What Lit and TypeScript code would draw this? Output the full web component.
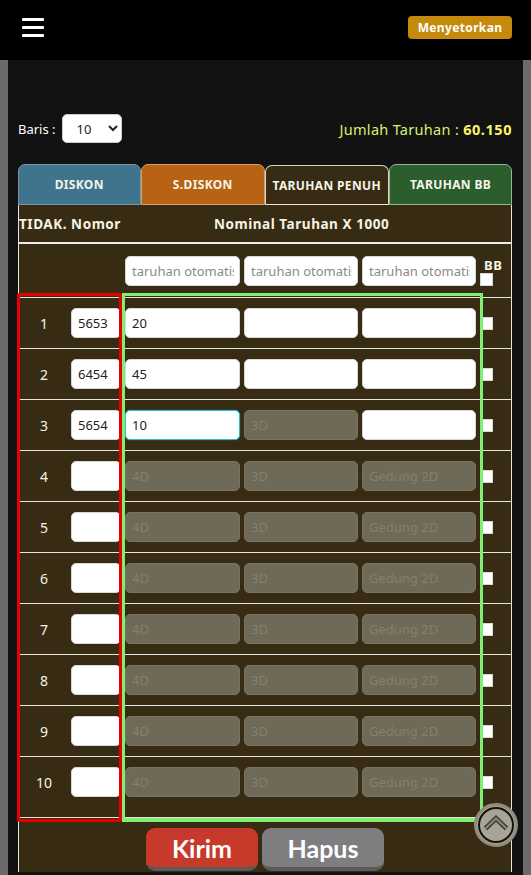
import { LitElement, html, css } from "lit";
import { customElement } from "lit/decorators.js";

type Row = { n: number; nomor: string; a: string; bOpen: boolean; cOpen: boolean; aOpen: boolean; focus?: boolean };

const rows: Row[] = [
  { n: 1, nomor: "5653", a: "20", aOpen: true, bOpen: true, cOpen: true },
  { n: 2, nomor: "6454", a: "45", aOpen: true, bOpen: true, cOpen: true },
  { n: 3, nomor: "5654", a: "10", aOpen: true, bOpen: false, cOpen: true, focus: true },
  ...[4, 5, 6, 7, 8, 9, 10].map((n) => ({ n, nomor: "", a: "", aOpen: false, bOpen: false, cOpen: false })),
];

@customElement("app-root")
export class AppRoot extends LitElement {
  static styles = css`
    :host {
      display: block;
      position: relative;
      height: 875px;
      overflow: hidden;
      background: #6b6b6b;
      font-family: "Noto Sans", "Open Sans", sans-serif;
      color: #fff;
    }
    * { box-sizing: border-box; }
    .topbar {
      height: 60px;
      background: #000;
      display: flex;
      align-items: center;
      justify-content: space-between;
      padding: 0 19px 5px 22px;
    }
    .burger { display: flex; flex-direction: column; gap: 5.5px; width: 22px; }
    .burger span { display: block; height: 2.5px; background: #fff; border-radius: 1px; }
    .deposit {
      width: 104px;
      height: 23px;
      background: #c58a0b;
      border-radius: 4px;
      font-size: 12px;
      font-weight: 700;
      letter-spacing: 0.35px;
      display: flex;
      align-items: center;
      justify-content: center;
    }
    .wrap {
      margin: 0 8px;
      height: 815px;
      background: #121212;
      padding: 54px 11px 0 10px;
    }
    .toolbar {
      height: 29px;
      display: flex;
      align-items: center;
      justify-content: space-between;
    }
    .baris { display: flex; align-items: center; gap: 6px; font-size: 13px; }
    select {
      width: 60px;
      height: 29px;
      border: 1px solid #ccc;
      border-radius: 5px;
      background: #fff;
      color: #222;
      font: 13px "Noto Sans", sans-serif;
      padding-left: 10px;
    }
    .total { font-size: 14.5px; letter-spacing: 0.3px; color: #dcf06c; }
    .total b { color: #f6f56a; font-weight: 700; letter-spacing: 0.55px; }
    .tabs {
      margin-top: 21px;
      height: 41px;
      display: grid;
      grid-template-columns: 122.5px 123.5px 123.5px 123px;
      gap: 0.5px;
    }
    .tab {
      border: 1px solid #d8d4c4;
      border-bottom: 1px solid #e8e8e0;
      border-radius: 7px 7px 0 0;
      display: flex;
      align-items: center;
      justify-content: center;
      font-size: 12px;
      font-weight: 700;
      letter-spacing: 0.35px;
      color: #f4f4ea;
    }
    .tab.blue { background: #40738c; border-color: #7a98a4; }
    .tab.orange { background: #b86214; border-color: #d0a070; }
    .tab.active { background: #372c13; margin-top: 1px; padding-top: 1px; }
    .tab.forest { background: #2b5e2c; border-color: #9ab49a; }
    .panel {
      width: 494px;
      background: #372c13;
      border-left: 1px solid #e8e6da;
      border-right: 1px solid #e8e6da;
      height: 667px;
      position: relative;
    }
    .title {
      height: 39px;
      padding-top: 1px;
      display: flex;
      align-items: center;
      font-size: 13.5px;
      font-weight: 700;
      letter-spacing: 0.55px;
      color: #f6f3e4;
      border-bottom: 2px solid #eeeee6;
    }
    .title .nom { margin-left: 93px; }
    .row {
      display: grid;
      grid-template-columns: 48px 50px 115px 114px 114px 17px;
      column-gap: 4px;
      align-items: center;
      height: 51px;
      border-bottom: 1px solid #e8e6da;
      font-size: 14px;
    }
    .row > * { min-width: 0; }
    .row .no { text-align: center; padding-left: 2px; color: #f6f3e4; }
    .row.head { height: 54px; }
    .row.last { height: 61px; padding-bottom: 10px; }
    input[type="text"] {
      width: 100%;
      height: 30px;
      border: 1px solid #d8d8d8;
      border-radius: 5px;
      background: #fff;
      color: #222;
      font: 13px "Noto Sans", sans-serif;
      padding: 0 5px 0 6px;
      outline: none;
      margin: 0;
      display: block;
    }
    input::placeholder { color: #8a8a8a; opacity: 1; }
    input.off { background: #6f6a58; border-color: #7a7563; }
    input.off::placeholder { color: #857f6c; }
    input.focus { border-color: #28bdd0; box-shadow: 0 0 1px #28bdd0; }
    input[type="checkbox"] {
      appearance: none;
      width: 13px;
      height: 13px;
      margin: 0;
      background: #fff;
      border: 1px solid #d8d8d8;
      display: block;
    }
    .bb { display: flex; flex-direction: column; align-items: flex-start; font-size: 13px; font-weight: 700; line-height: 16px; padding-top: 1px; }
    .bb span { margin-left: 4px; color: #f6f3e4; letter-spacing: 0.5px; }
    .box-red, .box-green {
      position: absolute;
      pointer-events: none;
      top: 88px;
      height: 529px;
      border-style: solid;
      border-width: 3px;
    }
    .box-red { left: -2px; width: 105px; border-color: #e80000; border-radius: 3px; }
    .box-green { left: 103px; width: 361px; border-color: #80ee70; border-bottom-width: 4px; }
    .actions {
      display: flex;
      gap: 4px;
      margin: 10px 0 0 127px;
    }
    .btn {
      height: 43px;
      border-bottom: 4px solid #5a5a58;
      border-radius: 9px;
      font: 700 25px Lato, "Noto Sans", sans-serif;
      color: #fff;
      display: flex;
      align-items: center;
      justify-content: center;
    }
    .kirim { width: 112px; background: #c6392b; }
    .hapus { width: 122px; background: #7e7e80; }
    .up {
      position: absolute;
      left: 474px;
      top: 803px;
      width: 44px;
      height: 44px;
      border-radius: 50%;
      background: #a8a497;
      border: 3.5px solid #8f8b7f;
      display: flex;
      align-items: center;
      justify-content: center;
    }
    .up .in {
      width: 36px;
      height: 36px;
      border: 2px solid #15120a;
      border-radius: 50%;
      display: flex;
      align-items: center;
      justify-content: center;
    }
    .up svg { display: block; margin-top: -4px; }
  `;

  private inp(off: boolean, value: string, ph: string, focus = false) {
    return html`<input type="text" class="${off ? "off" : ""} ${focus ? "focus" : ""}" .value=${value} placeholder=${off ? ph : ""} />`;
  }

  render() {
    return html`
      <div class="topbar">
        <div class="burger"><span></span><span></span><span></span></div>
        <div class="deposit">Menyetorkan</div>
      </div>
      <div class="wrap">
        <div class="toolbar">
          <div class="baris">
            <span>Baris :</span>
            <select><option>10</option></select>
          </div>
          <div class="total">Jumlah Taruhan : <b>60.150</b></div>
        </div>
        <div class="tabs">
          <div class="tab blue">DISKON</div>
          <div class="tab orange">S.DISKON</div>
          <div class="tab active">TARUHAN PENUH</div>
          <div class="tab forest">TARUHAN BB</div>
        </div>
        <div class="panel">
          <div class="title"><span>TIDAK. Nomor</span><span class="nom">Nominal Taruhan X 1000</span></div>
          <div class="row head">
            <div></div><div></div>
            <input type="text" placeholder="taruhan otomatis" />
            <input type="text" placeholder="taruhan otomatis" />
            <input type="text" placeholder="taruhan otomatis" />
            <div class="bb"><span>BB</span><input type="checkbox" /></div>
          </div>
          ${rows.map(
            (r) => html`
              <div class="row ${r.n === 10 ? "last" : ""}">
                <div class="no">${r.n}</div>
                <input type="text" class="nomor" .value=${r.nomor} />
                ${this.inp(!r.aOpen, r.a, "4D", r.focus)}
                ${this.inp(!r.bOpen, "", "3D")}
                ${this.inp(!r.cOpen, "", "Gedung 2D")}
                <input type="checkbox" />
              </div>
            `
          )}
          <div class="box-red"></div>
          <div class="box-green"></div>
          <div class="actions">
            <div class="btn kirim">Kirim</div>
            <div class="btn hapus">Hapus</div>
          </div>
        </div>
      </div>
      <div class="up">
        <div class="in">
          <svg width="26" height="16" viewBox="0 0 26 16" fill="none" stroke-linejoin="miter">
            <path d="M2.5 13.5 L13 3.5 L23.5 13.5" stroke="#3d392c" stroke-width="5" />
            <path d="M2.5 13.5 L13 3.5 L23.5 13.5" stroke="#8c887b" stroke-width="2" />
          </svg>
        </div>
      </div>
    `;
  }
}
